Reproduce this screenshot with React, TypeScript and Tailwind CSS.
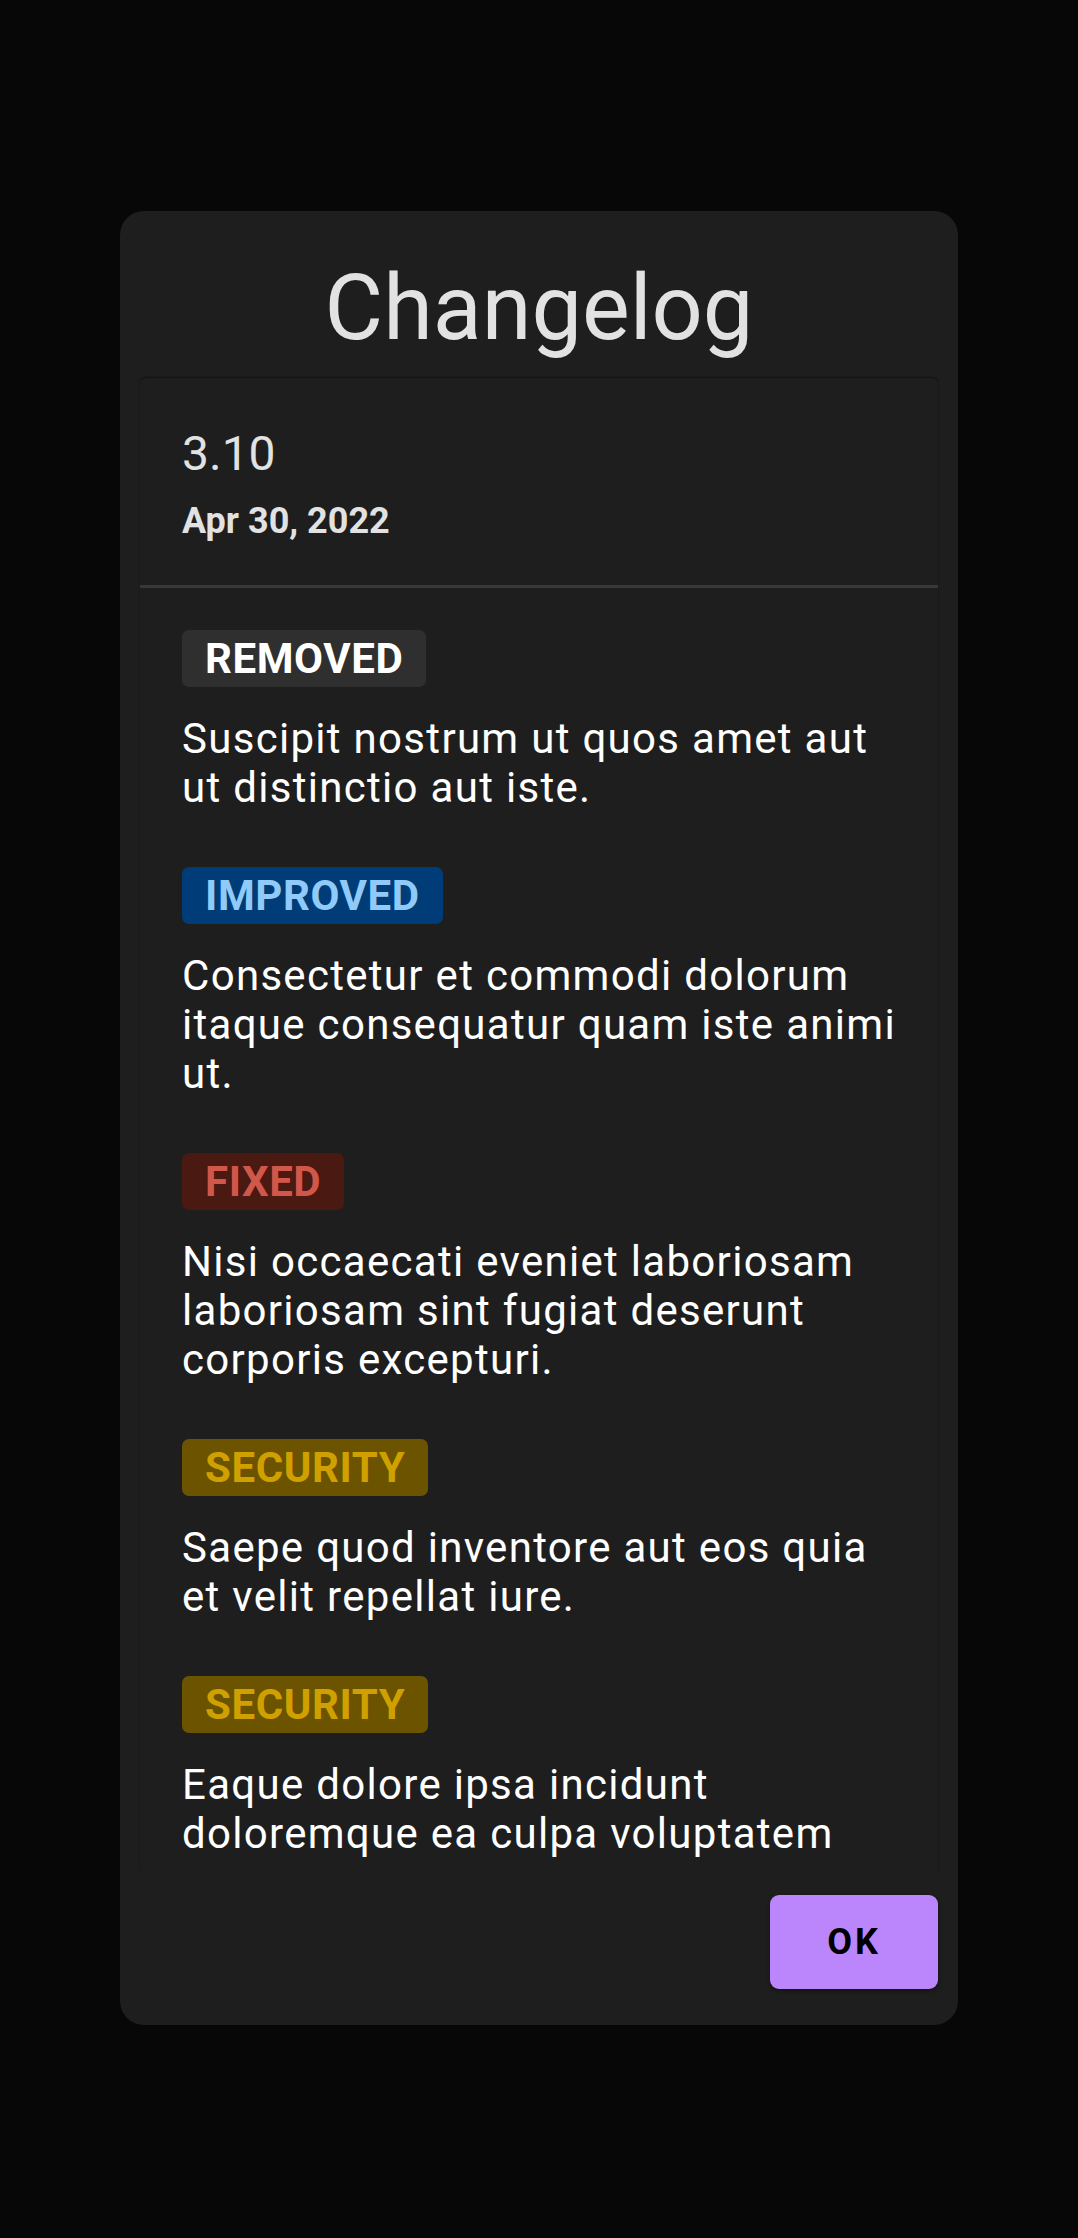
import React from 'react'

type Tag = 'REMOVED' | 'IMPROVED' | 'FIXED' | 'SECURITY'

const tagStyles: Record<Tag, string> = {
  REMOVED: 'bg-[#2f2f2f] text-white',
  IMPROVED: 'bg-[#003c78] text-[#90caf9]',
  FIXED: 'bg-[#4a1911] text-[#d2574b]',
  SECURITY: 'bg-[#6b5300] text-[#cfa000]',
}

const entries: { tag: Tag; text: string }[] = [
  { tag: 'REMOVED', text: 'Suscipit nostrum ut quos amet aut ut distinctio aut iste.' },
  { tag: 'IMPROVED', text: 'Consectetur et commodi dolorum itaque consequatur quam iste animi ut.' },
  { tag: 'FIXED', text: 'Nisi occaecati eveniet laboriosam laboriosam sint fugiat deserunt corporis excepturi.' },
  { tag: 'SECURITY', text: 'Saepe quod inventore aut eos quia et velit repellat iure.' },
  { tag: 'SECURITY', text: 'Eaque dolore ipsa incidunt doloremque ea culpa voluptatem' },
]

export default function App() {
  return (
    <div
      className="min-h-screen w-full bg-[#070707] flex justify-center pt-[211px]"
      style={{ fontFamily: 'Roboto, "Noto Sans", sans-serif' }}
    >
      <div className="w-[838px] h-[1814px] rounded-[24px] bg-[#1e1e1e] pt-[45px] pb-[36px] flex flex-col">
        {/* Title */}
        <h1 className="text-[90px] leading-[106px] text-center text-[#e2e2e2] font-normal">Changelog</h1>

        {/* Release card */}
        <div className="mx-[20px] mt-[16px] h-[1492px] overflow-hidden rounded-t-[6px] shadow-[0_-1px_2px_rgba(0,0,0,0.45)] bg-[#1e1e1e]">
          <div className="px-[42px] pt-[48px]">
            <div className="text-[48px] leading-[56px] text-[#e2e2e2]">3.10</div>
            <div className="mt-[18px] text-[36px] leading-[42px] font-bold text-[#e2e2e2]">Apr 30, 2022</div>
          </div>
          <div className="mt-[43px] h-[3px] bg-[#383838]" />

          <div className="pl-[42px] pr-[28px] pt-[42px] flex flex-col gap-[55px]">
            {entries.map((entry, i) => (
              <div key={i}>
                <span
                  className={`inline-block rounded-[7px] px-[23px] pt-[4px] pb-[4px] text-[42px] leading-[49px] font-bold tracking-[0.6px] ${tagStyles[entry.tag]}`}
                >
                  {entry.tag}
                </span>
                <p className="mt-[27px] text-[42px] leading-[49px] tracking-[1.3px] text-white">
                  {entry.text}
                </p>
              </div>
            ))}
          </div>
        </div>

        {/* Actions */}
        <div className="mt-[25px] mr-[20px] flex justify-end">
          <button className="w-[168px] h-[94px] rounded-[9px] bg-[#bb86fc] text-black text-[36px] font-bold tracking-[3px] shadow-[0_2px_4px_rgba(0,0,0,0.4)]">
            OK
          </button>
        </div>
      </div>
    </div>
  )
}
